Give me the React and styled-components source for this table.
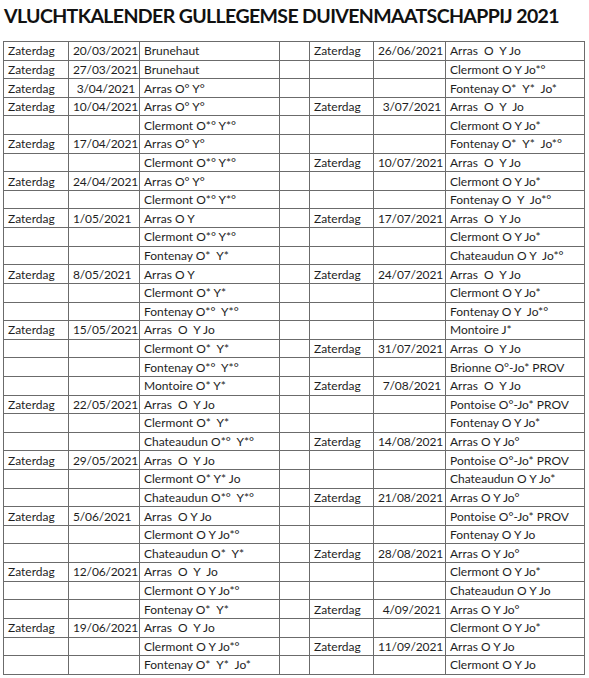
import styled, { createGlobalStyle } from 'styled-components';

const GlobalStyle = createGlobalStyle`
  body {
    margin: 0;
    background: #ffffff;
    font-family: Lato, "Liberation Sans", sans-serif;
  }
`;

const Page = styled.div`
  width: 589px;
  height: 678px;
  padding: 0 5px 0 3px;
  box-sizing: border-box;
  overflow: hidden;
`;

const Title = styled.h1`
  margin: 0;
  padding: 4px 0 0 1px;
  height: 38px;
  box-sizing: border-box;
  font-size: 19.5px;
  line-height: 23px;
  letter-spacing: -0.62px;
  font-weight: 700;
  color: #111111;
  white-space: nowrap;
`;

const Table = styled.table`
  border-collapse: collapse;
  table-layout: fixed;
  width: 581px;
  border: 1px solid #666666;
  margin-top: 3px;
`;

const Cell = styled.td`
  height: 18.62px;
  padding: 0 4px;
  box-sizing: border-box;
  border: 1px solid #6b6b6b;
  font-size: 12px;
  line-height: 17px;
  color: #1e1e1e;
  white-space: pre;
  overflow: hidden;
  text-align: ${(p) => (p.$right ? 'right' : 'left')};
  letter-spacing: ${(p) => (p.$date ? '-0.15px' : '0')};
`;

const widths = [65, 71, 140, 30, 64, 72, 139];

const Z = 'Zaterdag';

// datums die als tekst zijn ingevuld staan links uitgelijnd
const textDates = new Set(['1/05/2021', '8/05/2021', '5/06/2021']);

// [linker dag, datum, vlucht, rechter dag, datum, vlucht]
const rows = [
  [Z, '20/03/2021', 'Brunehaut', Z, '26/06/2021', 'Arras  O  Y Jo'],
  [Z, '27/03/2021', 'Brunehaut', '', '', 'Clermont O Y Jo*°'],
  [Z, '3/04/2021', 'Arras O° Y°', '', '', 'Fontenay O*  Y*  Jo*'],
  [Z, '10/04/2021', 'Arras O° Y°', Z, '3/07/2021', 'Arras  O  Y  Jo'],
  ['', '', 'Clermont O*° Y*°', '', '', 'Clermont O Y Jo*'],
  [Z, '17/04/2021', 'Arras O° Y°', '', '', 'Fontenay O*  Y*  Jo*°'],
  ['', '', 'Clermont O*° Y*°', Z, '10/07/2021', 'Arras  O  Y Jo'],
  [Z, '24/04/2021', 'Arras O° Y°', '', '', 'Clermont O Y Jo*'],
  ['', '', 'Clermont O*° Y*°', '', '', 'Fontenay O  Y  Jo*°'],
  [Z, '1/05/2021', 'Arras O Y', Z, '17/07/2021', 'Arras  O  Y Jo'],
  ['', '', 'Clermont O*° Y*°', '', '', 'Clermont O Y Jo*'],
  ['', '', 'Fontenay O*  Y*', '', '', 'Chateaudun O Y  Jo*°'],
  [Z, '8/05/2021', 'Arras O Y', Z, '24/07/2021', 'Arras  O  Y Jo'],
  ['', '', 'Clermont O* Y*', '', '', 'Clermont O Y Jo*'],
  ['', '', 'Fontenay O*°  Y*°', '', '', 'Fontenay O Y  Jo*°'],
  [Z, '15/05/2021', 'Arras  O  Y Jo', '', '', 'Montoire J*'],
  ['', '', 'Clermont O*  Y*', Z, '31/07/2021', 'Arras  O  Y Jo'],
  ['', '', 'Fontenay O*°  Y*°', '', '', 'Brionne O°-Jo* PROV'],
  ['', '', 'Montoire O* Y*', Z, '7/08/2021', 'Arras  O  Y Jo'],
  [Z, '22/05/2021', 'Arras  O  Y Jo', '', '', 'Pontoise O°-Jo* PROV'],
  ['', '', 'Clermont O*  Y*', '', '', 'Fontenay O Y Jo*'],
  ['', '', 'Chateaudun O*°  Y*°', Z, '14/08/2021', 'Arras O Y Jo°'],
  [Z, '29/05/2021', 'Arras  O  Y Jo', '', '', 'Pontoise O°-Jo* PROV'],
  ['', '', 'Clermont O* Y* Jo', '', '', 'Chateaudun O Y Jo*'],
  ['', '', 'Chateaudun O*°  Y*°', Z, '21/08/2021', 'Arras O Y Jo°'],
  [Z, '5/06/2021', 'Arras  O Y Jo', '', '', 'Pontoise O°-Jo* PROV'],
  ['', '', 'Clermont O Y Jo*°', '', '', 'Fontenay O Y Jo'],
  ['', '', 'Chateaudun O*  Y*', Z, '28/08/2021', 'Arras O Y Jo°'],
  [Z, '12/06/2021', 'Arras  O  Y  Jo', '', '', 'Clermont O Y Jo*'],
  ['', '', 'Clermont O Y Jo*°', '', '', 'Chateaudun O Y Jo'],
  ['', '', 'Fontenay O*  Y*', Z, '4/09/2021', 'Arras O Y Jo°'],
  [Z, '19/06/2021', 'Arras  O  Y Jo', '', '', 'Clermont O Y Jo*'],
  ['', '', 'Clermont O Y Jo*°', Z, '11/09/2021', 'Arras O Y Jo'],
  ['', '', 'Fontenay O*  Y*  Jo*', '', '', 'Clermont O Y Jo'],
];

function DateCell({ value }) {
  return (
    <Cell $date $right={!textDates.has(value)}>
      {value}
    </Cell>
  );
}

export default function App() {
  return (
    <Page>
      <GlobalStyle />
      <Title>VLUCHTKALENDER GULLEGEMSE DUIVENMAATSCHAPPIJ 2021</Title>
      <Table>
        <colgroup>
          {widths.map((w, i) => (
            <col key={i} style={{ width: w }} />
          ))}
        </colgroup>
        <tbody>
          {rows.map((r, i) => (
            <tr key={i}>
              <Cell>{r[0]}</Cell>
              <DateCell value={r[1]} />
              <Cell>{r[2]}</Cell>
              <Cell />
              <Cell>{r[3]}</Cell>
              <DateCell value={r[4]} />
              <Cell>{r[5]}</Cell>
            </tr>
          ))}
        </tbody>
      </Table>
    </Page>
  );
}
